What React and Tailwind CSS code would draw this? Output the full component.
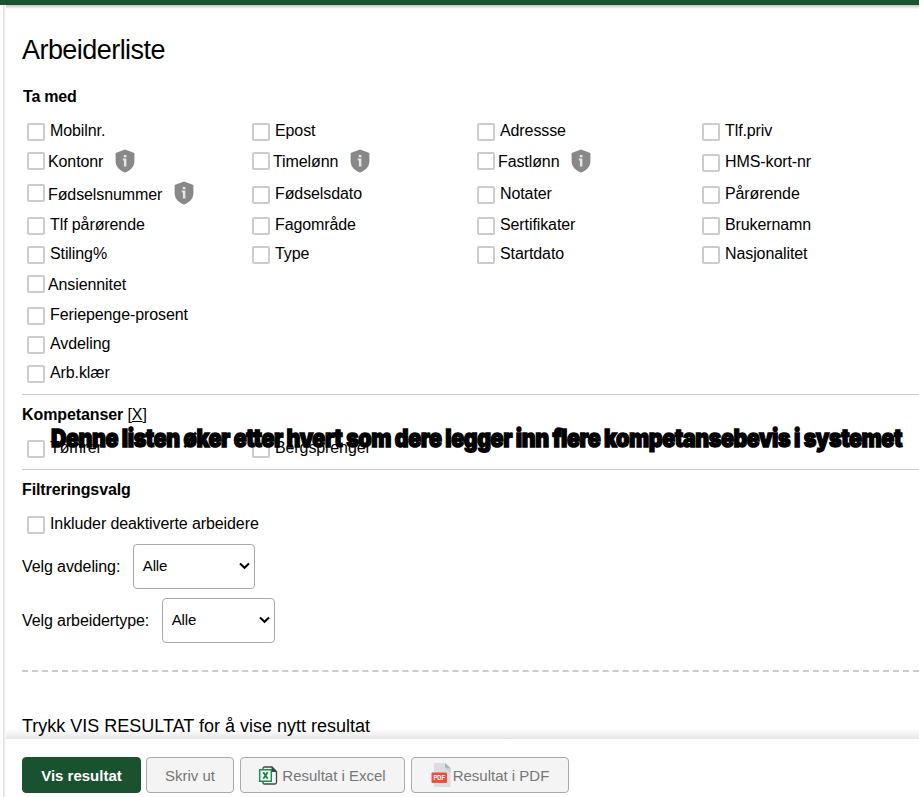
import clsx from 'clsx';

// One entry per row: cells from left to right, `tight` puts the label right against the box
const rows = [
  { height: 'h-[31px]', cells: [{ label: 'Mobilnr.' }, { label: 'Epost' }, { label: 'Adressse' }, { label: 'Tlf.priv' }] },
  {
    height: 'h-8',
    cells: [
      { label: 'Kontonr', tight: true, shield: true },
      { label: 'Timelønn', tight: true, shield: true },
      { label: 'Fastlønn', tight: true, shield: true },
      { label: 'HMS-kort-nr' },
    ],
  },
  {
    height: 'h-[31px]',
    cells: [
      { label: 'Fødselsnummer', tight: true, shield: true, low: true },
      { label: 'Fødselsdato' },
      { label: 'Notater' },
      { label: 'Pårørende' },
    ],
  },
  { height: 'h-[29px]', cells: [{ label: 'Tlf pårørende' }, { label: 'Fagområde' }, { label: 'Sertifikater' }, { label: 'Brukernamn' }] },
  { height: 'h-[31px]', cells: [{ label: 'Stiling%' }, { label: 'Type' }, { label: 'Startdato' }, { label: 'Nasjonalitet' }] },
  { height: 'h-[30px]', cells: [{ label: 'Ansiennitet', tight: true }] },
  { height: 'h-[29px]', cells: [{ label: 'Feriepenge-prosent' }] },
  { height: 'h-[29px]', cells: [{ label: 'Avdeling' }] },
  { height: 'h-[31px]', cells: [{ label: 'Arb.klær' }] },
];

const ShieldInfo = () => (
  <svg width="20" height="24" viewBox="0 0 20 24" className="shrink-0 ml-3 -mt-[3px]">
    <path d="M10 .5 19.4 4v8.2c0 5.2-4.2 9.5-9.4 11.3C4.800 21.700.6 17.400.6 12.200V4z" fill="#888" />
    <path d="M8.800 6h2.600v2.200H8.800zM7.800 9.600h3.600v7.900H8.900v-6H7.800z" fill="#e4e4e4" />
  </svg>
);

const ExcelIcon = () => (
  <svg width="19" height="19" viewBox="0 0 19 19" className="shrink-0">
    <path d="M4 4V2.500Q4 1 5.500 1H13l4.500 4.500v11q0 1.500-1.500 1.500H5.500Q4 18 4 16.500V15" fill="none" stroke="#444" strokeWidth="1.300" />
    <path d="M12.500.5 18 6h-5.500z" fill="#444" />
    <path d="M.7 3.700h11.600v11.600H.7z" fill="#f4f4f4" stroke="#15904e" strokeWidth="1.400" />
    <path d="m4.300 6.300 4.400 6.500M8.700 6.300l-4.400 6.500" stroke="#15804a" strokeWidth="1.700" />
  </svg>
);

const PdfIcon = () => (
  <svg width="20" height="24" viewBox="0 0 20 24" className="shrink-0">
    <path d="M3 0h11l5.500 5v19H3z" fill="#d9dee1" />
    <path d="M14 0l5.500 5H14z" fill="#a9b5bd" />
    <path d="M14 5h5.500v5z" fill="#c5ced3" />
    <rect x=".5" y="9.500" width="15.500" height="10.500" rx="1" fill="#e9503e" />
    <text x="2.500" y="17.300" fontFamily="Liberation Sans, sans-serif" fontWeight="700" fontSize="6.800" fill="#fff" textLength="11.500" lengthAdjust="spacingAndGlyphs">PDF</text>
  </svg>
);

const Check = ({ label, tight, shield, low }) => (
  <label className="flex items-start w-[225px] shrink-0 pl-[5px] leading-5">
    <span className={clsx('size-[18px] shrink-0 rounded-[2px] border-2 border-[#ccc] bg-white', tight ? 'mt-0' : 'mt-0.5')} />
    <span className={clsx('whitespace-nowrap', tight ? 'ml-[3px]' : 'ml-[5px]', low && 'mt-px')}>{label}</span>
    {shield && <ShieldInfo />}
  </label>
);

const SelectBox = ({ label, width, gap }) => (
  <div className={clsx('flex items-center h-[45px]', gap)}>
    <span className="whitespace-nowrap">{label}</span>
    <div className={clsx('h-full flex shrink-0 items-center justify-between rounded-[4px] border border-[#aaa] pl-[8.5px] pr-1', width)}>
      <span className="text-[15px]">Alle</span>
      <svg width="11" height="8" viewBox="0 0 11 8" className="-mt-px">
        <path d="m1 1.500 4.500 4.300L10 1.500" fill="none" stroke="#000" strokeWidth="2" />
      </svg>
    </div>
  </div>
);

const Button = ({ className, children }) => (
  <button className={clsx('h-9 flex items-center justify-center rounded-[4px] border whitespace-nowrap text-[15px] tracking-normal', className)}>
    {children}
  </button>
);

const muted = 'border-[#aaa] bg-[#f4f4f4] text-[#777]';

const App = () => (
  <div className="h-[797px] w-full flex flex-col overflow-hidden bg-white text-black text-base tracking-[-0.1px] font-['Liberation_Sans',Arial,sans-serif]">
    <header className="h-[5px] shrink-0 bg-[#1a512e]" />

    <div className="flex-1 min-h-0 flex">
      <div className="w-[3px] shrink-0 bg-[#fdfdfd]" />
      <div className="w-[3px] shrink-0 bg-gradient-to-r from-[#dcdcdc] to-white" />

      <div className="flex-1 min-w-0 flex flex-col">
        <div className="h-1 shrink-0 bg-gradient-to-b from-[#c4c4c4] to-white" />

        <main className="h-[730px] shrink-0 pl-4">
          <h1 className="pt-[25px] text-[27px] leading-8 tracking-[-0.55px]">Arbeiderliste</h1>
          <h2 className="mt-[21px] ml-px font-bold leading-5 tracking-[-0.2px]">Ta med</h2>

          <section className="mt-[14px] border-b border-[#ccc]">
            {rows.map(({ height, cells }) => (
              <div key={cells[0].label} className={clsx('flex', height)}>
                {cells.map((cell) => <Check key={cell.label} {...cell} />)}
              </div>
            ))}
          </section>

          <section className="relative h-[75px] pt-[10px] border-b border-[#ccc]">
            <h2 className="leading-5">
              <b>Kompetanser</b> [<a href="#" className="underline">X</a>]
            </h2>
            <div className="flex mt-[13px]">
              <Check label="Tømrer" />
              <Check label="Bergsprenger" />
            </div>
            {/* Annotation written across the list */}
            <svg width="858" height="36" className="absolute left-[26px] top-[26px] overflow-visible">
              <text
                x="3" y="26.300" textLength="851" lengthAdjust="spacingAndGlyphs" letterSpacing="-0.5"
                fontFamily="Inter, sans-serif" fontWeight="900" fontSize="24.500" stroke="#000" strokeWidth="1.400"
              >
                Denne listen øker etter hvert som dere legger inn flere kompetansebevis i systemet
              </text>
            </svg>
          </section>

          <section>
            <h2 className="pt-[10px] font-bold leading-5">Filtreringsvalg</h2>
            <div className="flex h-[44px] pt-[14px]">
              <Check label="Inkluder deaktiverte arbeidere" />
            </div>
            <SelectBox label="Velg avdeling:" width="w-[122px] ml-[13px]" />
            <SelectBox label="Velg arbeidertype:" width="w-[113px] ml-[13px]" gap="mt-[9px]" />
          </section>

          <div className="mt-[27px] border-t-2 border-dashed border-[#ccc]" />
          <p className="mt-[42px] text-[18px] leading-6 tracking-normal">Trykk VIS RESULTAT for å vise nytt resultat</p>
        </main>

        <div className="relative h-2.5 -mt-2.5 shrink-0 bg-gradient-to-b from-transparent to-black/10" />
        <footer className="h-[58px] shrink-0 flex pl-4 pt-[18px] bg-white">
          <Button className="w-[119px] pt-0.5 border-[#1a512e] bg-[#1a512e] text-white font-bold">Vis resultat</Button>
          <Button className={clsx('w-[88px] ml-[5px] pt-0.5', muted)}>Skriv ut</Button>
          <Button className={clsx('w-[165px] ml-1.5 gap-1', muted)}>
            <ExcelIcon />
            <span className="pt-0.5">Resultat i Excel</span>
          </Button>
          <Button className={clsx('w-[158px] ml-1.5 gap-0.5', muted)}>
            <PdfIcon />
            <span className="pt-0.5">Resultat i PDF</span>
          </Button>
        </footer>
      </div>
    </div>
  </div>
);

export default App;
